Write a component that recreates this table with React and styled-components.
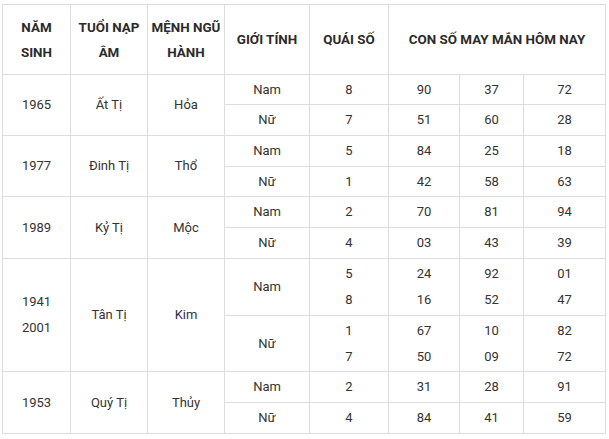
import React from 'react';
import styled, { createGlobalStyle } from 'styled-components';

const GlobalStyle = createGlobalStyle`
  html, body {
    margin: 0;
    padding: 0;
    background: #fff;
  }
  body {
    font-family: Roboto, "Liberation Sans", Arial, sans-serif;
    color: #333;
  }
`;

const Wrap = styled.div`
  padding: 4px 0 0 2px;
`;

const Table = styled.table`
  border-collapse: collapse;
  table-layout: fixed;
  width: 603px;
  font-size: 13px;
`;

const Head = styled.th`
  border: 1px solid #ddd;
  font-weight: 700;
  font-size: 13.4px;
  line-height: 25px;
  padding: 0;
  text-align: center;
  vertical-align: middle;
  color: #2b2b2b;
`;

const Cell = styled.td`
  border: 1px solid #ddd;
  padding: 0;
  text-align: center;
  vertical-align: middle;
  line-height: 26px;
  color: #333;
`;

const Row = styled.tr`
  height: ${p => p.h}px;
`;

const widths = [68, 77, 77, 85, 79, 71, 64, 82];

const data = [
  { year: ['1965'], tuoi: 'Ất Tị', menh: 'Hỏa', rows: [
    { g: 'Nam', q: ['8'], n: [['90'], ['37'], ['72']], h: 30 },
    { g: 'Nữ', q: ['7'], n: [['51'], ['60'], ['28']], h: 31 },
  ] },
  { year: ['1977'], tuoi: 'Đinh Tị', menh: 'Thổ', rows: [
    { g: 'Nam', q: ['5'], n: [['84'], ['25'], ['18']], h: 31 },
    { g: 'Nữ', q: ['1'], n: [['42'], ['58'], ['63']], h: 30 },
  ] },
  { year: ['1989'], tuoi: 'Kỷ Tị', menh: 'Mộc', rows: [
    { g: 'Nam', q: ['2'], n: [['70'], ['81'], ['94']], h: 31 },
    { g: 'Nữ', q: ['4'], n: [['03'], ['43'], ['39']], h: 31 },
  ] },
  { year: ['1941', '2001'], tuoi: 'Tân Tị', menh: 'Kim', rows: [
    { g: 'Nam', q: ['5', '8'], n: [['24', '16'], ['92', '52'], ['01', '47']], h: 57 },
    { g: 'Nữ', q: ['1', '7'], n: [['67', '50'], ['10', '09'], ['82', '72']], h: 56 },
  ] },
  { year: ['1953'], tuoi: 'Quý Tị', menh: 'Thủy', rows: [
    { g: 'Nam', q: ['2'], n: [['31'], ['28'], ['91']], h: 31 },
    { g: 'Nữ', q: ['4'], n: [['84'], ['41'], ['59']], h: 31 },
  ] },
];

const Lines = ({ items }) => items.map((t, i) => (
  <React.Fragment key={i}>{i > 0 && <br />}{t}</React.Fragment>
));

export default function App() {
  return (
    <Wrap>
      <GlobalStyle />
      <Table>
        <colgroup>
          {widths.map((w, i) => <col key={i} style={{ width: w }} />)}
        </colgroup>
        <thead>
          <Row h={70}>
            <Head>NĂM<br />SINH</Head>
            <Head>TUỔI NẠP<br />ÂM</Head>
            <Head>MỆNH NGŨ<br />HÀNH</Head>
            <Head>GIỚI TÍNH</Head>
            <Head>QUÁI SỐ</Head>
            <Head colSpan={3}>CON SỐ MAY MẮN HÔM NAY</Head>
          </Row>
        </thead>
        <tbody>
          {data.map(grp => grp.rows.map((r, i) => (
            <Row h={r.h} key={grp.tuoi + i}>
              {i === 0 && (
                <>
                  <Cell rowSpan={2}><Lines items={grp.year} /></Cell>
                  <Cell rowSpan={2}>{grp.tuoi}</Cell>
                  <Cell rowSpan={2}>{grp.menh}</Cell>
                </>
              )}
              <Cell>{r.g}</Cell>
              <Cell><Lines items={r.q} /></Cell>
              {r.n.map((col, j) => <Cell key={j}><Lines items={col} /></Cell>)}
            </Row>
          )))}
        </tbody>
      </Table>
    </Wrap>
  );
}
